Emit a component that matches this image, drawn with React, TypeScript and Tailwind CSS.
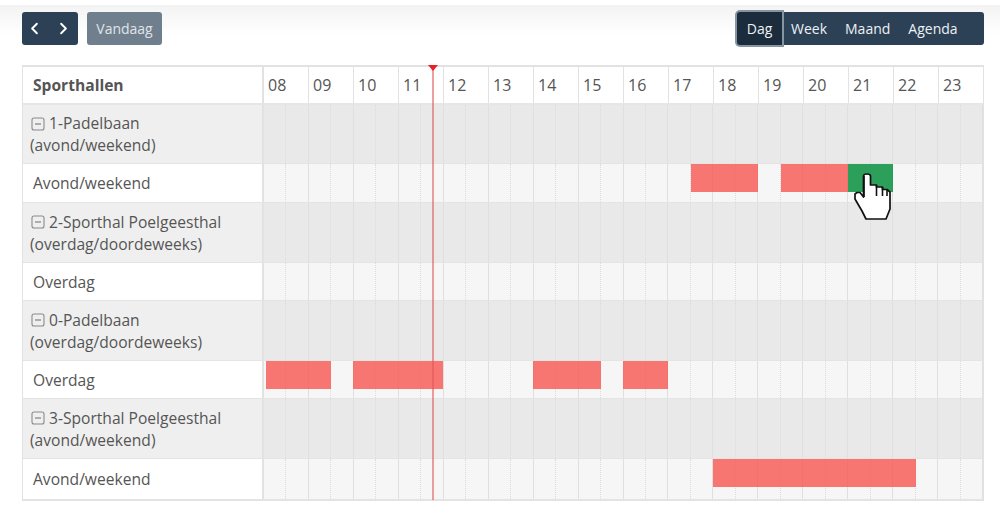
import React from 'react';
import { ChevronLeft, ChevronRight } from 'lucide-react';

const hours = ['08', '09', '10', '11', '12', '13', '14', '15', '16', '17', '18', '19', '20', '21', '22', '23'];
const fontStack = { fontFamily: '"Open Sans", "Noto Sans", sans-serif' };

type Bar = { left: number; width: number; green?: boolean };
type Row = { kind: 'group' | 'child'; label: string; sub?: string; height: number; bars?: Bar[] };

const rows: Row[] = [
  { kind: 'group', label: '1-Padelbaan', sub: '(avond/weekend)', height: 59 },
  { kind: 'child', label: 'Avond/weekend', height: 39, bars: [
    { left: 427, width: 67 },
    { left: 517, width: 67 },
    { left: 584, width: 45, green: true },
  ] },
  { kind: 'group', label: '2-Sporthal Poelgeesthal', sub: '(overdag/doordeweeks)', height: 60 },
  { kind: 'child', label: 'Overdag', height: 38 },
  { kind: 'group', label: '0-Padelbaan', sub: '(overdag/doordeweeks)', height: 60 },
  { kind: 'child', label: 'Overdag', height: 38, bars: [
    { left: 2, width: 65 },
    { left: 89, width: 90 },
    { left: 269, width: 68 },
    { left: 359, width: 45 },
  ] },
  { kind: 'group', label: '3-Sporthal Poelgeesthal', sub: '(avond/weekend)', height: 60 },
  { kind: 'child', label: 'Avond/weekend', height: 41, bars: [{ left: 449, width: 203 }] },
];

function MinusBox() {
  return (
    <svg width="14" height="14" viewBox="0 0 14 14" className="inline-block mr-[4px] ml-[1px] mb-[2px] align-middle">
      <rect x="1" y="1" width="12" height="12" rx="2" fill="none" stroke="#8a8a8a" strokeWidth="1.1" />
      <path d="M4 7h6" stroke="#777" strokeWidth="1.1" />
    </svg>
  );
}

function HandCursor() {
  return (
    <svg width="39" height="50" viewBox="0 0 39 50" className="absolute left-[590px] top-[8px] z-20">
      <path
        d="M9.5 4Q9.5 2 13 2Q16.5 2 16.5 4V13H22.5V15H28.5V17.5H33L36 20V37L32 47H12L8 39L1 27V22L3 20.5H6L9.5 25Z"
        fill="#fff"
        stroke="#111"
        strokeWidth="1.7"
        strokeLinejoin="round"
      />
      <path d="M22.5 13V24M28.5 15V24M33 17.5V24M10 4V25" fill="none" stroke="#111" strokeWidth="1.6" />
    </svg>
  );
}

function GridLines() {
  return (
    <div className="absolute inset-0 flex">
      {hours.map((h) => (
        <div key={h} className="flex-1 flex border-r border-[#dfdfdf]">
          <div className="flex-1 border-r border-dotted border-[#dcdcdc]" />
          <div className="flex-1" />
        </div>
      ))}
    </div>
  );
}

function SchedulerRow({ row }: { row: Row }) {
  const isGroup = row.kind === 'group';
  return (
    <div className="group flex border-b border-[#e4e4e4] last:border-b-0" style={{ height: row.height }}>
      <div
        className={`w-[239px] shrink-0 flex items-center ${isGroup ? 'bg-[#efefef] pl-[7px]' : 'bg-white pl-[10px] pt-[2px] group-last:pt-0 group-last:pb-[2px]'}`}
      >
        {isGroup ? (
          <div className="leading-[22px]">
            <MinusBox />
            {row.label}
            <br />
            {row.sub}
          </div>
        ) : (
          row.label
        )}
      </div>
      <div className="w-[2px] shrink-0 bg-[#e2e2e2]" />
      <div className={`relative flex-1 ${isGroup ? 'bg-[#e9e9e9]' : 'bg-[#f6f6f6]'}`}>
        <GridLines />
        {row.bars?.map((b) => (
          <div
            key={b.left}
            className={`absolute top-0 h-[28px] z-10 ${b.green ? 'bg-[#1f9a50f0]' : 'bg-[#f85f5ad9]'}`}
            style={{ left: b.left, width: b.width }}
          />
        ))}
        {row.bars?.some((b) => b.green) && <HandCursor />}
      </div>
    </div>
  );
}

export default function App() {
  return (
    <div className="w-[1000px] h-[525px] bg-white text-[15.6px] text-[#555] overflow-hidden" style={fontStack}>
      {/* Toolbar */}
      <div className="mt-[5px] h-[60px] pt-[7px] pl-[22px] pr-[16px] flex justify-between items-start bg-gradient-to-b from-[#f3f3f3] via-white to-white">
        <div className="flex gap-[9px]">
          <div className="flex items-center h-[33px] w-[56px] rounded-[3px] bg-[#2c4056] text-white pl-[3px] gap-[10px]">
            <ChevronLeft size={19} strokeWidth={2.4} />
            <ChevronRight size={19} strokeWidth={2.4} />
          </div>
          <div className="h-[33px] w-[75px] rounded-[3px] bg-[#6f7f8d] text-[#e0e4e8] flex items-center justify-center text-[14px]">
            Vandaag
          </div>
        </div>
        <div className="flex h-[33px] w-[247px] rounded-[3px] bg-[#2c4056] text-[#eef1f4] text-[14px] items-center">
          <div className="h-full w-[45px] flex items-center justify-center rounded-l-[3px] bg-[#1b2d3c] ring-2 ring-[#8795a2]">
            Dag
          </div>
          <div className="ml-[9px]">Week</div>
          <div className="ml-[18px]">Maand</div>
          <div className="ml-[18px]">Agenda</div>
        </div>
      </div>

      {/* Scheduler table */}
      <div className="relative ml-[22px] w-[962px] border border-[#e2e2e2] border-t-2">
        <div className="flex h-[38px] border-b-2 border-[#e6e6e6]">
          <div className="w-[239px] shrink-0 flex items-center pl-[10px] pt-[2px] font-bold bg-white">
            Sporthallen
          </div>
          <div className="w-[2px] shrink-0 bg-[#e2e2e2]" />
          <div className="flex flex-1 bg-white">
            {hours.map((h) => (
              <div key={h} className="flex-1 flex items-center pl-[4px] text-[16px] border-r border-[#e2e2e2] last:border-r-0">
                {h}
              </div>
            ))}
          </div>
        </div>
        {rows.map((row, i) => (
          <SchedulerRow key={i} row={row} />
        ))}

        {/* Current time marker */}
        <div className="absolute left-[409px] top-[-2px] bottom-0 w-[2px] bg-[#e2555590] z-10" />
        <div className="absolute left-[405px] top-[-2px] w-0 h-0 border-x-[5px] border-x-transparent border-t-[6px] border-t-[#e3242b] z-10" />
      </div>
    </div>
  );
}
